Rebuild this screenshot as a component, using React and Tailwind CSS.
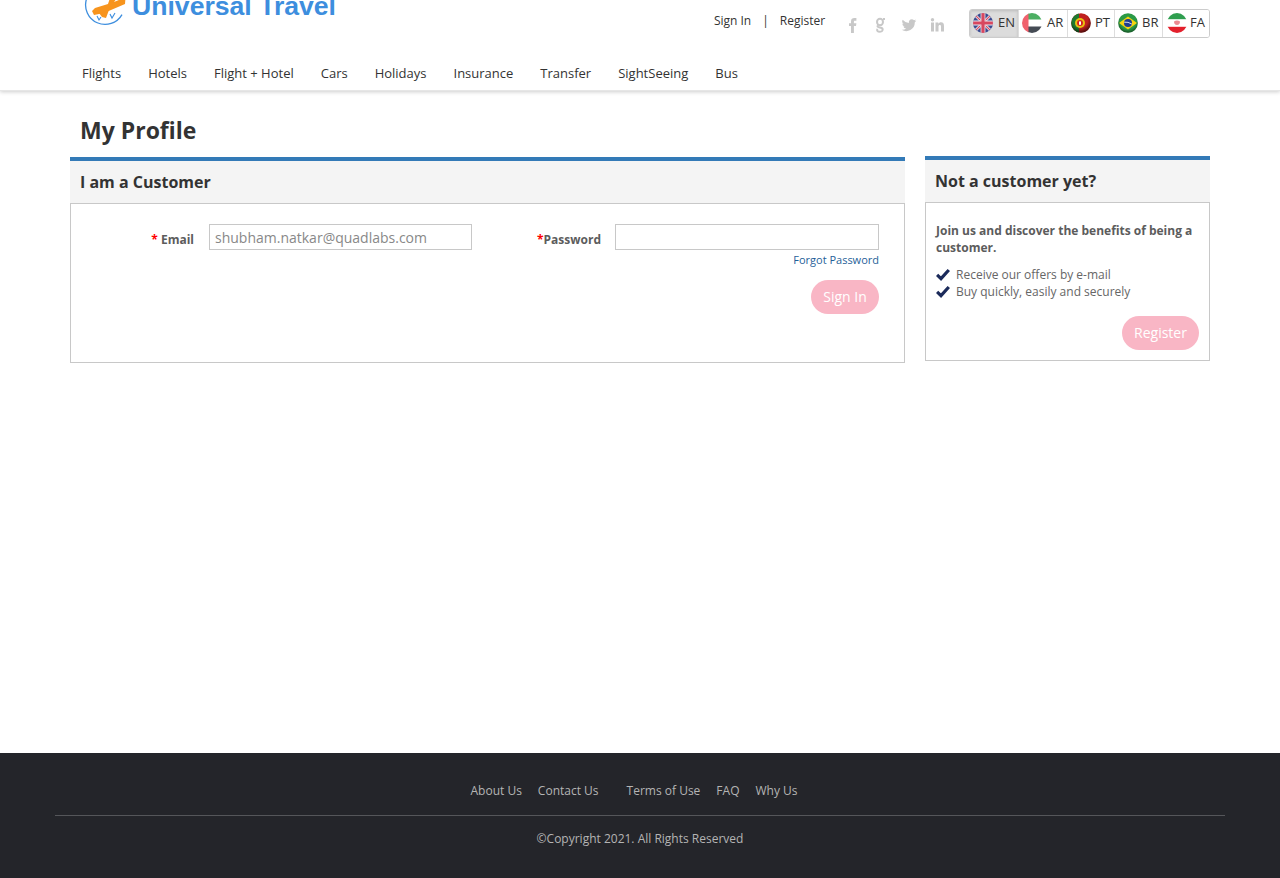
import React from "react";

const nav = ["Flights", "Hotels", "Flight + Hotel", "Cars", "Holidays", "Insurance", "Transfer", "SightSeeing", "Bus"];

function Uk() {
  return (
    <svg width="20" height="20" viewBox="0 0 20 20">
      <defs><clipPath id="uk"><circle cx="10" cy="10" r="10" /></clipPath></defs>
      <g clipPath="url(#uk)">
        <rect width="20" height="20" fill="#3a4a90" />
        <path d="M0 0L20 20M20 0L0 20" stroke="#e9e9ee" strokeWidth="2.800" />
        <path d="M0 0L20 20M20 0L0 20" stroke="#d8475f" strokeWidth="1.200" />
        <path d="M10 0V20M0 10H20" stroke="#e9e9ee" strokeWidth="4.800" />
        <path d="M10 0V20M0 10H20" stroke="#d8475f" strokeWidth="3.200" />
      </g>
    </svg>
  );
}
function Ae() {
  return (
    <svg width="20" height="20" viewBox="0 0 20 20">
      <defs><clipPath id="ae"><circle cx="10" cy="10" r="10" /></clipPath></defs>
      <g clipPath="url(#ae)">
        <rect width="20" height="20" fill="#fff" />
        <rect x="6" width="14" height="6.500" fill="#4caf63" />
        <rect x="6" y="13.500" width="14" height="6.500" fill="#454b54" />
        <rect width="6.500" height="20" fill="#f0616d" />
      </g>
    </svg>
  );
}
function Pt() {
  return (
    <svg width="20" height="20" viewBox="0 0 20 20">
      <defs>
        <clipPath id="pt"><circle cx="10" cy="10" r="9.800" /></clipPath>
        <radialGradient id="ptg" cx="0.45" cy="0.35" r="0.65">
          <stop offset="0.6" stopColor="#000" stopOpacity="0" />
          <stop offset="1" stopColor="#000" stopOpacity="0.65" />
        </radialGradient>
      </defs>
      <g clipPath="url(#pt)">
        <rect width="20" height="20" fill="#c0201e" />
        <rect width="8" height="20" fill="#1f7a30" />
        <circle cx="9" cy="10" r="5" fill="#e8c10f" />
        <circle cx="9" cy="10" r="3" fill="#d62222" />
        <rect x="8" y="8.400" width="2" height="3.400" fill="#fff" />
        <rect width="20" height="20" fill="url(#ptg)" />
      </g>
    </svg>
  );
}
function Br() {
  return (
    <svg width="20" height="20" viewBox="0 0 20 20">
      <defs>
        <clipPath id="br"><circle cx="10" cy="10" r="9.800" /></clipPath>
        <radialGradient id="brg" cx="0.5" cy="0.4" r="0.62">
          <stop offset="0.65" stopColor="#000" stopOpacity="0" />
          <stop offset="1" stopColor="#000" stopOpacity="0.55" />
        </radialGradient>
      </defs>
      <g clipPath="url(#br)">
        <rect width="20" height="20" fill="#2a9a46" />
        <path d="M10 3.400L19 10L10 16.600L1 10Z" fill="#f5d40f" />
        <circle cx="10" cy="10" r="4" fill="#1f3d8f" />
        <path d="M6.200 9.200Q10 8.600 13.800 11" stroke="#fff" strokeWidth="0.800" fill="none" />
        <rect width="20" height="20" fill="url(#brg)" />
      </g>
    </svg>
  );
}
function Ir() {
  return (
    <svg width="20" height="20" viewBox="0 0 20 20">
      <defs><clipPath id="ir"><circle cx="10" cy="10" r="10" /></clipPath></defs>
      <g clipPath="url(#ir)">
        <rect width="20" height="20" fill="#fff" />
        <rect width="20" height="6.200" fill="#2f9e4f" />
        <rect y="13.800" width="20" height="6.200" fill="#e3202c" />
        <path d="M7 8.400Q10 6.800 13 8.400Q13 11.800 10 12Q7 11.800 7 8.400Z" fill="#ec8b92" />
      </g>
    </svg>
  );
}

const langs = [
  { code: "EN", Flag: Uk, cls: "w-[48px] gap-[5px] pl-[3px]", active: true },
  { code: "AR", Flag: Ae, cls: "w-[49px] gap-[5px] pl-[3px]" },
  { code: "PT", Flag: Pt, cls: "w-[47px] gap-[4px] pl-[3px]" },
  { code: "BR", Flag: Br, cls: "w-[48px] gap-[4px] pl-[3px]" },
  { code: "FA", Flag: Ir, cls: "w-[47px] gap-[3px] pl-[4px]" },
];

function Check() {
  return (
    <svg width="14" height="13" viewBox="0 0 14 13" className="shrink-0">
      <path d="M1.100 6.800L5 10.600L12.800 2" fill="none" stroke="#1b2a5a" strokeWidth="3.200" />
    </svg>
  );
}

function Logo() {
  return (
    <svg width="44" height="27" viewBox="0 0 44 27" className="shrink-0">
      <path d="M2.500 0A19.500 19.500 0 0 0 38 15.600" fill="none" stroke="#3d8ede" strokeWidth="1.300" />
      <path d="M8 12L10 16L20 14L41 5L41.500 -1L36 0.500L30 3L33 -1H26L24 5L11 9Z" fill="#f7941d" />
      <path d="M15 14L25 11L22 19L18 18Z" fill="#f7941d" />
      <path d="M13 17l2 4l2-3M26 15l2 4l3-5" fill="none" stroke="#3d8ede" strokeWidth="1.100" />
    </svg>
  );
}

function Social() {
  return (
    <div className="flex items-center gap-[13.300px] text-[#c8c8c8] mt-[17px] ml-[21px]">
      <svg width="14" height="16" viewBox="0 0 14 16" fill="currentColor"><path d="M5 16V9H3V6.300H5V4.400C5 2 6.400 1 8.300 1H10.400V3.700H9C8.100 3.700 7.900 4.100 7.900 4.800V6.300H10.400L10 9H7.900V16Z" /></svg>
      <svg width="14" height="16" viewBox="0 0 14 16" fill="none" stroke="currentColor" strokeWidth="2"><ellipse cx="7" cy="5" rx="3" ry="3.200" /><path d="M10 2H12M5 8.500C3.500 10 6 10.200 8 10.800C10.600 11.600 10 14.800 7 14.800C4.400 14.800 3.400 13.400 4.600 12" /></svg>
      <svg width="16" height="16" viewBox="0 0 24 24" fill="currentColor"><path d="M23 5.500a9 9 0 0 1-2.600.7 4.500 4.500 0 0 0 2-2.500 9 9 0 0 1-2.900 1.100 4.500 4.500 0 0 0-7.700 4.100A12.800 12.800 0 0 1 2.500 4.200a4.500 4.500 0 0 0 1.400 6 4.500 4.500 0 0 1-2-.6v.1a4.500 4.500 0 0 0 3.600 4.400 4.500 4.500 0 0 1-2 .1 4.500 4.500 0 0 0 4.200 3.100A9 9 0 0 1 1 19.200a12.800 12.800 0 0 0 19.700-10.800v-.6A9 9 0 0 0 23 5.500Z" /></svg>
      <svg width="14" height="16" viewBox="0 0 14 16" fill="currentColor"><rect x="1" y="5.500" width="3" height="9" /><circle cx="2.500" cy="2.800" r="1.700" /><path d="M5.500 5.500H8.300V6.800C8.800 6 9.800 5.300 11 5.300C13.300 5.300 14 6.800 14 9V14.500H11V9.600C11 8.500 10.700 7.900 9.900 7.900C9 7.900 8.500 8.500 8.500 9.600V14.500H5.500Z" /></svg>
    </div>
  );
}

const sans = "font-['Open_Sans','Noto_Sans',sans-serif]";

export default function App() {
  return (
    <div className={`${sans} h-[878px] flex flex-col bg-white overflow-hidden`}>
      <header className="h-[91px] shrink-0 shadow-[0_1px_4px_rgba(0,0,0,0.2)] border-b border-[#e6e6e6] overflow-hidden">
        <div className="w-[1140px] mx-auto h-[56px] flex justify-between">
          <div className="flex items-start pl-[14px] -mt-[1px]">
            <Logo />
            <span className="font-['Liberation_Sans',sans-serif] font-bold text-[26.600px] leading-[30px] -mt-[8px] ml-[4px] text-[#3d8ede]">Universal Travel</span>
          </div>
          <div className="flex items-start">
            <div className="flex text-[12px] leading-[17px] text-[#333] mt-[12px]">
              <span>Sign In</span>
              <span className="mx-[11px] text-[#333]">|</span>
              <span>Register</span>
            </div>
            <Social />
            <div className="ml-[25px] mt-[9px] flex h-[29px] border border-[#ccc] rounded-[3px] overflow-hidden">
              {langs.map(({ code, Flag, cls, active }, i) => (
                <div key={code} className={`${cls} flex items-center pb-[2px] text-[13px] text-[#333] ${i ? "border-l border-[#ddd]" : ""} ${active ? "bg-[#dcdcdc] shadow-[inset_0_1px_3px_rgba(0,0,0,0.15)]" : "bg-white"}`}>
                  <Flag />
                  <span>{code}</span>
                </div>
              ))}
            </div>
          </div>
        </div>
        <nav className="w-[1140px] mx-auto flex gap-[27px] pl-[12px] pt-[7px] text-[13px] leading-[20px] text-[#333]">
          {nav.map((n) => <span key={n}>{n}</span>)}
        </nav>
      </header>

      <main className="w-[1140px] mx-auto flex-1">
        <h1 className="pl-[10px] pt-[23px] text-[23px] leading-[32px] font-bold text-[#333]">My Profile</h1>
        <div className="flex gap-[20px] items-start">
          <section className="w-[835px] mt-[11px]">
            <div className="h-[46px] border-t-4 border-[#337ab7] bg-[#f4f4f4] pl-[10px] flex items-center text-[16px] font-bold text-[#333]">I am a Customer</div>
            <div className="h-[160px] border border-[#c8c8c8] flex">
              <div className="w-[402px] pt-[20px] flex items-start">
                <label className="w-[123px] text-right text-[12px] font-bold leading-[18px] pt-[7px] text-[#5c5c5c]"><span className="text-[#f00]">*</span> Email</label>
                <input readOnly value="shubham.natkar@quadlabs.com" className="ml-[15px] w-[263px] h-[26px] border border-[#c8c8c8] px-[5px] text-[14px] text-[#888] outline-none" />
              </div>
              <div className="flex-1 pt-[20px] flex items-start">
                <label className="w-[128px] text-right text-[12px] font-bold leading-[18px] pt-[7px] text-[#5c5c5c]"><span className="text-[#f00]">*</span>Password</label>
                <div className="ml-[14px] w-[264px] flex flex-col items-end">
                  <input readOnly className="w-full h-[26px] border border-[#c8c8c8] outline-none" />
                  <span className="text-[11px] leading-[15px] mt-[2px] text-[#1f5f99]">Forgot Password</span>
                  <button className="mt-[13px] h-[34px] w-[68px] pb-[2px] rounded-[17px] bg-[#f9b6c5] text-white text-[14px]">Sign In</button>
                </div>
              </div>
            </div>
          </section>
          <aside className="w-[285px] mt-[10px]">
            <div className="h-[46px] border-t-4 border-[#337ab7] bg-[#f4f4f4] pl-[10px] flex items-center text-[16px] font-bold text-[#333]">Not a customer yet?</div>
            <div className="h-[159px] border border-[#c8c8c8] px-[10px] pt-[19px]">
              <p className="text-[12px] font-bold leading-[17px] text-[#5c5c5c]">Join us and discover the benefits of being a customer.</p>
              <ul className="mt-[10px] text-[12px] leading-[17px] text-[#666]">
                <li className="flex items-center gap-[6px]"><Check />Receive our offers by e-mail</li>
                <li className="flex items-center gap-[6px]"><Check />Buy quickly, easily and securely</li>
              </ul>
              <div className="flex justify-end mt-[16px]">
                <button className="h-[34px] w-[77px] pb-[2px] rounded-[17px] bg-[#f9b6c5] text-white text-[14px]">Register</button>
              </div>
            </div>
          </aside>
        </div>
      </main>

      <footer className="h-[125px] shrink-0 bg-[#24252a] text-[12px] text-[#b4b4b4] px-[55px]">
        <div className="h-[63px] border-b border-[#55565a] pt-[29px] leading-[17px] flex justify-center pr-[12px]">
          <span>About Us</span>
          <span className="ml-[16px]">Contact Us</span>
          <span className="ml-[28px]">Terms of Use</span>
          <span className="ml-[16px]">FAQ</span>
          <span className="ml-[16px]">Why Us</span>
        </div>
        <div className="text-center pt-[14px] leading-[17px]">©Copyright 2021. All Rights Reserved</div>
      </footer>
    </div>
  );
}
